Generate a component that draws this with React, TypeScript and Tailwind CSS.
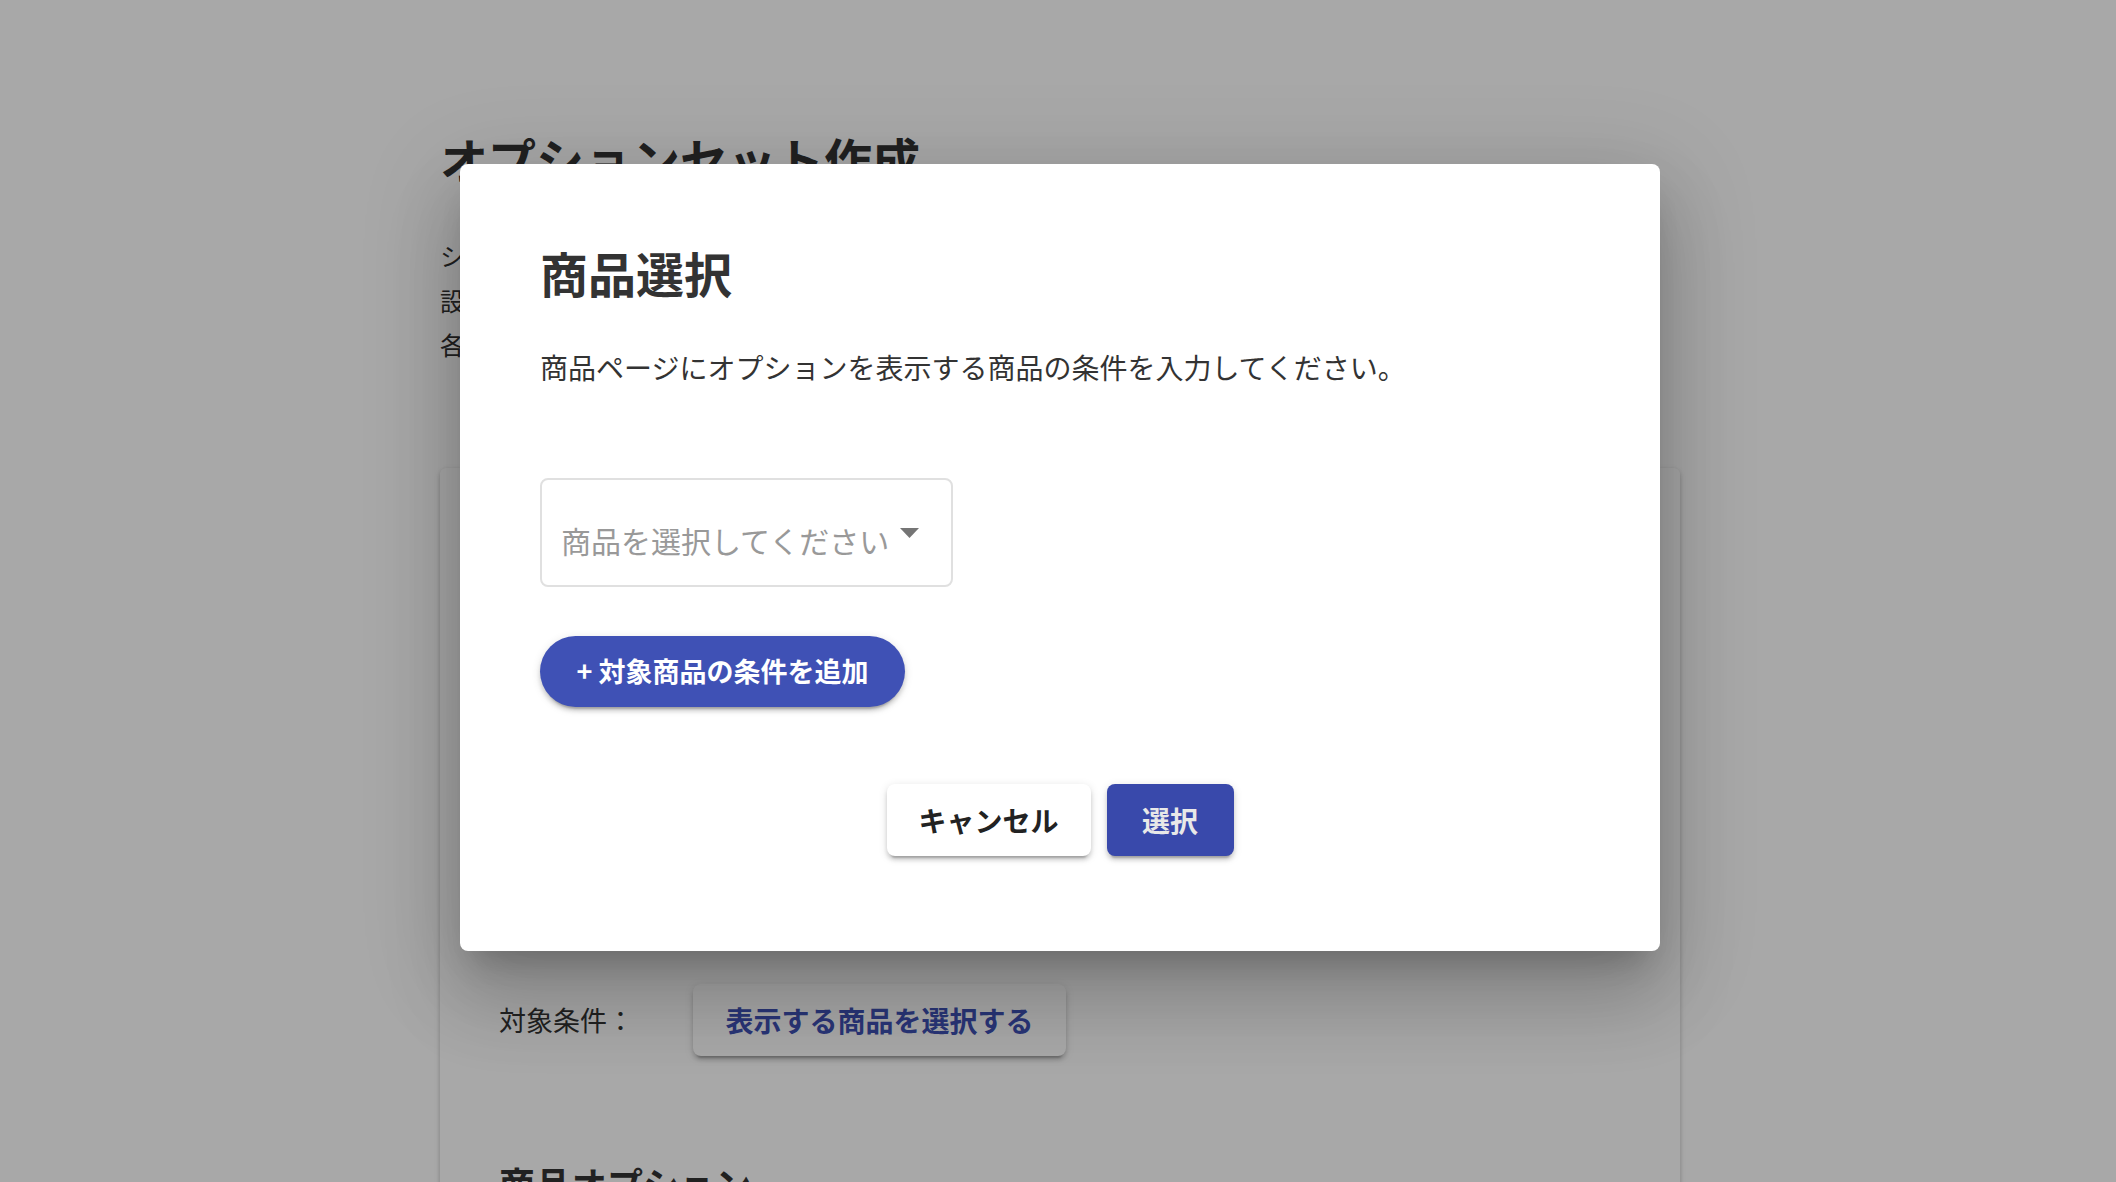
import React from "react";

const FONT = '"Noto Sans CJK JP", "Noto Sans", "Liberation Sans", sans-serif';

export default function App() {
  return (
    <div
      className="relative h-[1182px] w-full overflow-hidden bg-white pl-[4px]"
      style={{ fontFamily: FONT }}
    >
      {/* Underlying page */}
      <div className="mx-auto w-[1240px] pt-[122px]">
        <h1 className="text-[48px] font-bold leading-[72px] text-[#333]">
          オプションセット作成
        </h1>
        <div className="mt-[39px] text-[25px] leading-[44.5px] text-[#333]">
          <p>ショップの商品ページに表示するオプションのセットを作成します。</p>
          <p>設定したオプションは、対象条件に一致する商品に表示されます。</p>
          <p>各項目を入力して、保存ボタンを押してください。</p>
        </div>

        <div className="mt-[101px] rounded-[6px] bg-white px-[59px] pt-[60px] pb-[200px] shadow-[0_4px_2px_-4px_rgba(0,0,0,0.2),0_2px_4px_0_rgba(0,0,0,0.14),0_2px_6px_0_rgba(0,0,0,0.12)]">
          <section className="h-[456px]">
            <h2 className="text-[36px] font-bold leading-[54px] text-[#333]">基本設定</h2>
            <div className="mt-[40px] text-[27px] leading-[40px] text-[#333]">オプションセット名</div>
            <div className="mt-[16px] h-[100px] w-[800px] rounded-[8px] border-2 border-[#ddd]" />
          </section>

          <div className="flex h-[72px] items-center">
            <span className="w-[194px] text-[27px] leading-[40px] text-[#333]">対象条件：</span>
            <button className="flex h-[72px] w-[373px] items-center justify-center rounded-[8px] bg-white text-[28px] font-bold text-[#3f51b5] shadow-[0_6px_2px_-4px_rgba(0,0,0,0.2),0_4px_4px_0_rgba(0,0,0,0.14),0_2px_10px_0_rgba(0,0,0,0.12)]">
              表示する商品を選択する
            </button>
          </div>

          <h2 className="mt-[100px] text-[36px] font-bold leading-[54px] text-[#333]">
            商品オプション
          </h2>
        </div>
      </div>

      {/* Backdrop + dialog */}
      <div className="absolute inset-0 flex items-start justify-center bg-[rgba(0,0,0,0.34)] pt-[164px] pl-[4px]">
        <div className="w-[1200px] rounded-[8px] bg-white px-[80px] pt-[73px] pb-[95px] shadow-[0_22px_30px_-14px_rgba(0,0,0,0.2),0_48px_76px_6px_rgba(0,0,0,0.14),0_18px_92px_16px_rgba(0,0,0,0.12)]">
          <h2 className="text-[48px] font-bold leading-[70px] text-[#333]">商品選択</h2>
          <p className="mt-[39px] text-[28px] leading-[42px] text-[#333]">
            商品ページにオプションを表示する商品の条件を入力してください。
          </p>

          <div className="mt-[90px] flex h-[109px] w-[413px] items-center rounded-[8px] border-2 border-[#e0e0e0] pl-[19px]">
            <span className="pt-[15px] text-[30px] leading-[40px] text-[#999]">
              商品を選択してください
            </span>
            <svg
              className="ml-[11px]"
              width="19"
              height="10"
              viewBox="0 0 19 10"
              aria-hidden="true"
            >
              <path d="M0 0 H19 L9.5 10 Z" fill="#757575" />
            </svg>
          </div>

          <button className="mt-[49px] flex h-[71px] w-[365px] items-center justify-center rounded-full bg-[#3f51b5] text-[27px] font-bold text-white shadow-[0_6px_2px_-4px_rgba(0,0,0,0.2),0_4px_4px_0_rgba(0,0,0,0.14),0_2px_10px_0_rgba(0,0,0,0.12)]">
            + 対象商品の条件を追加
          </button>

          <div className="mt-[77px] flex justify-center gap-[16px]">
            <button className="flex h-[72px] w-[204px] items-center justify-center rounded-[8px] bg-white text-[28px] font-bold text-[#222] shadow-[0_6px_2px_-4px_rgba(0,0,0,0.2),0_4px_4px_0_rgba(0,0,0,0.14),0_2px_10px_0_rgba(0,0,0,0.12)]">
              キャンセル
            </button>
            <button className="flex h-[72px] w-[127px] items-center justify-center rounded-[8px] bg-[#3949ab] text-[28px] font-bold text-[#e8e8e8] shadow-[0_6px_2px_-4px_rgba(0,0,0,0.2),0_4px_4px_0_rgba(0,0,0,0.14),0_2px_10px_0_rgba(0,0,0,0.12)]">
              選択
            </button>
          </div>
        </div>
      </div>
    </div>
  );
}
